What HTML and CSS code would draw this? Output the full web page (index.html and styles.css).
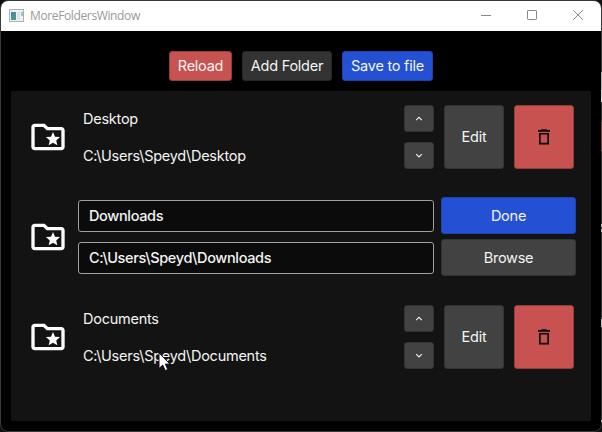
FILE: index.html
```html
<!DOCTYPE html>
<html lang="en">
<head>
<meta charset="utf-8">
<title>MoreFoldersWindow</title>
<link rel="stylesheet" href="styles.css">
</head>
<body>
<svg class="symbols" aria-hidden="true">
  <symbol id="folder" viewBox="0 0 24 24"><path d="M20 6h-8l-2-2H4c-1.1 0-1.99.9-1.99 2L2 18c0 1.1.9 2 2 2h16c1.1 0 2-.9 2-2V8c0-1.1-.9-2-2-2zm0 12H4V6h5.17l2 2H20v10zm-6.92-3.96L12.39 17 15 15.47 17.61 17l-.69-2.96 2.3-1.99-3.03-.26L15 9l-1.19 2.79-3.03.26z"/></symbol>
  <symbol id="up" viewBox="0 0 8 6"><path d="M1.2 4.1 4 1.3l2.8 2.8"/></symbol>
  <symbol id="down" viewBox="0 0 8 6"><path d="M1.2 1.1 4 3.9l2.8-2.8"/></symbol>
  <symbol id="trash" viewBox="0 0 12 16"><path d="M0 1h3.2V.3h5.6V1H12v1.7H0zM1 4h10v11.5H1zM2.7 5.6v8.2h6.6V5.6z" fill-rule="evenodd"/></symbol>
</svg>
<div class="window">
  <header class="titlebar">
    <svg class="app-icon" viewBox="0 0 15 13"><rect x=".5" y=".5" width="14" height="12" fill="#eef2f4" stroke="#a9b0b6"/><rect x="2" y="3" width="5" height="8" fill="#4b9590"/><rect x="2" y="3" width="2" height="4" fill="#4a83ac"/><rect x="8" y="3" width="3" height="8" fill="#dce5e5"/><rect x="12" y="3" width="2" height="4" fill="#9bc9ae"/></svg>
    <span class="title">MoreFoldersWindow</span>
    <div class="controls">
      <svg viewBox="0 0 10 10"><path d="M0 5.5h10"/></svg>
      <svg viewBox="0 0 10 10"><rect x=".5" y=".5" width="9" height="9" rx=".6"/></svg>
      <svg viewBox="0 0 10 10"><path d="M.2.2l9.6 9.6M9.8.2.2 9.8"/></svg>
    </div>
  </header>
  <nav class="toolbar">
    <button class="btn danger reload">Reload</button>
    <button class="btn dark add">Add Folder</button>
    <button class="btn primary save">Save to file</button>
  </nav>
  <main class="panel">
    <section class="row">
      <svg class="folder"><use href="#folder"/></svg>
      <div class="labels"><span>Desktop</span><span>C:\Users\Speyd\Desktop</span></div>
      <div class="order"><button class="btn"><svg><use href="#up"/></svg></button><button class="btn"><svg><use href="#down"/></svg></button></div>
      <button class="btn big">Edit</button>
      <button class="btn big danger"><svg class="trash"><use href="#trash"/></svg></button>
    </section>
    <section class="row editing">
      <svg class="folder"><use href="#folder"/></svg>
      <div class="fields"><div class="field">Downloads</div><div class="field">C:\Users\Speyd\Downloads</div></div>
      <div class="actions"><button class="btn primary">Done</button><button class="btn">Browse</button></div>
    </section>
    <section class="row">
      <svg class="folder"><use href="#folder"/></svg>
      <div class="labels"><span>Documents</span><span>C:\Users\Speyd\Documents</span></div>
      <div class="order"><button class="btn"><svg><use href="#up"/></svg></button><button class="btn"><svg><use href="#down"/></svg></button></div>
      <button class="btn big">Edit</button>
      <button class="btn big danger"><svg class="trash"><use href="#trash"/></svg></button>
    </section>
  </main>
</div>
<div class="edge"></div>
<svg class="cursor" viewBox="0 0 13 20"><path d="M1 1v15.5l3.7-3.4 2.5 5.5 2.6-1.2-2.5-5.3H12z"/></svg>
</body>
</html>
```

FILE: styles.css
```css
* { box-sizing: border-box; }
body {
  margin: 0;
  width: 602px;
  height: 432px;
  overflow: hidden;
  background: #111;
  font: 14.5px/20px Inter, "Liberation Sans", sans-serif;
  letter-spacing: -0.25px;
  color: #f4f4f4;
}
.symbols { position: absolute; width: 0; height: 0; }
.window {
  width: 602px;
  height: 432px;
  border: 1px solid #3a3838;
  border-radius: 8px;
  background: #000;
  overflow: hidden;
}
.titlebar {
  height: 30px;
  background: #fff;
  display: flex;
  align-items: center;
  padding: 0 18px 0 8px;
}
.app-icon { width: 15px; height: 13px; margin-top: -2px; }
.title {
  margin-left: 6px;
  font: 12px/16px "Open Sans", sans-serif;
  letter-spacing: -0.37px;
  color: #999;
}
.controls { margin-left: auto; display: flex; gap: 36px; margin-top: -2px; }
.controls svg { width: 10px; height: 10px; fill: none; stroke: #888; }
.toolbar {
  height: 60px;
  padding: 20px 0 0 168px;
  display: flex;
  gap: 10px;
}
.btn {
  margin: 0;
  padding: 0;
  border: 1px solid #333;
  border-radius: 3px;
  background: #424242;
  color: #f4f4f4;
  font: inherit;
  letter-spacing: inherit;
  display: flex;
  align-items: center;
  justify-content: center;
}
.toolbar .btn { height: 30px; }
.reload { width: 63px; }
.add { width: 90px; }
.save { width: 91px; }
.btn.danger { background: #c85250; border-color: #8f3f3e; color: #f4f4f4; }
.btn.dark { background: #333; border-color: #272727; }
.btn.primary { background: #2451d3; border-color: #1d43ad; }
.panel {
  width: 580px;
  height: 330px;
  margin-left: 10px;
  background: #131313;
  padding-top: 14px;
}
.row {
  height: 64px;
  margin-bottom: 36px;
  padding-left: 17px;
  display: flex;
  align-items: center;
  gap: 10px;
}
.folder { width: 40px; height: 40px; fill: #fff; }
.labels {
  width: 321px;
  margin-left: -5px;
  padding-left: 10px;
  height: 64px;
  display: flex;
  flex-direction: column;
  gap: 17px;
  padding-top: 4px;
}
.order { display: flex; flex-direction: column; gap: 10px; }
.order .btn { width: 30px; height: 27px; }
.order svg { width: 8px; height: 6px; fill: none; stroke: #eee; stroke-width: 1.2; }
.big { width: 60px; height: 64px; }
.trash { width: 12px; height: 16px; fill: #080303; }
.fields { width: 356px; display: flex; flex-direction: column; gap: 10px; }
.field {
  height: 32px;
  border: 1px solid #a0a0a0;
  border-radius: 3px;
  background: #0b0b0b;
  padding: 5px 10px;
  line-height: 20px;
  font-weight: 500;
  letter-spacing: -0.35px;
}
.editing { gap: 0; }
.editing .fields { margin-left: 10px; }
.actions { width: 135px; margin: -1px 0 0 7px; display: flex; flex-direction: column; gap: 5px; }
.actions .btn { height: 37px; }
.edge {
  position: absolute;
  right: 0;
  top: 72px;
  width: 1px;
  height: 350px;
  background: linear-gradient(#aaa 0 18px, #ddd 18px 30px, #343434 30px 50px, #853b39 50px 79px, #343434 79px 152px, #bbb 152px 155px, #343434 155px 157px, #bbb 157px 160px, #343434 160px 247px, #bbb 247px 255px, #343434 255px 348px, #bbb 348px);
}
.cursor {
  position: absolute;
  left: 158px;
  top: 352px;
  width: 13px;
  height: 20px;
  fill: #fff;
  stroke: #10101c;
}
```
